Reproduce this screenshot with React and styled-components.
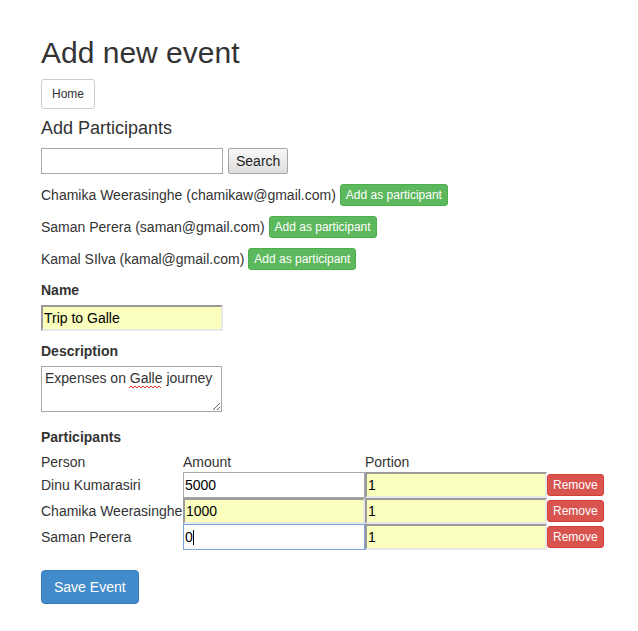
import React from "react"
import styled, { createGlobalStyle, css } from "styled-components"

const GlobalStyle = createGlobalStyle`
  body {
    margin: 0;
    background: #fff;
    font-family: "Liberation Sans", Arial, sans-serif;
    font-size: 14px;
    line-height: 20px;
    color: #333;
  }
`

const Page = styled.div`
  padding: 0 41px 30px;
`

const Title = styled.h2`
  margin: 36px 0 10px;
  font-size: 30px;
  font-weight: 400;
  line-height: 33px;
`

const Nav = styled.nav`
  display: flex;
  margin-bottom: 9px;
`

const SubTitle = styled.h4`
  margin: 0 0 10px;
  font-size: 18px;
  font-weight: 400;
  line-height: 20px;
`

const Row = styled.div`
  display: flex;
  align-items: center;
  gap: ${({ $gap }) => $gap || 4}px;
  margin-bottom: 10px;
  min-height: 22px;
`

const btnColors = {
  default: { bg: "#fff", border: "#ccc", color: "#333" },
  success: { bg: "#5cb85c", border: "#4cae4c", color: "#fff" },
  danger: { bg: "#d9534f", border: "#d43f3a", color: "#fff" },
  primary: { bg: "#428bca", border: "#357ebd", color: "#fff" },
}

const sizes = {
  xs: css`
    height: 22px;
    padding: 0 5px;
    font-size: 12px;
    border-radius: 3px;
  `,
  sm: css`
    height: 30px;
    padding: 0 10px;
    font-size: 12px;
    border-radius: 3px;
  `,
  md: css`
    height: 34px;
    padding: 0 12px;
    font-size: 14px;
    border-radius: 4px;
  `,
}

const Button = styled.button`
  display: inline-flex;
  align-items: center;
  justify-content: center;
  flex-shrink: 0;
  font-family: inherit;
  line-height: 1.5;
  cursor: pointer;
  border: 1px solid ${({ $variant }) => btnColors[$variant].border};
  background: ${({ $variant }) => btnColors[$variant].bg};
  color: ${({ $variant }) => btnColors[$variant].color};
  ${({ $size }) => sizes[$size]}
`

const PlainButton = styled.button`
  height: 26px;
  padding: 0 7px;
  font-family: inherit;
  font-size: 14px;
  color: #222;
  border: 1px solid #a6a6a6;
  border-radius: 2px;
  background: linear-gradient(#f8f8f8, #dddddd);
  cursor: pointer;
`

const Input = styled.input`
  box-sizing: border-box;
  width: ${({ $width }) => $width || 182}px;
  height: 26px;
  margin: 0;
  font-family: inherit;
  font-size: 14px;
  color: #000;
  outline: none;
  ${({ $filled, $focused }) =>
    $filled
      ? css`
          background: #faffbd;
          padding: 0 1px;
          border: 2px solid;
          border-color: #9a9a9a #e8e8e8 #e8e8e8 #9a9a9a;
        `
      : css`
          background: #fff;
          padding: 1px 1px;
          border: 1px solid ${$focused ? "#7ba4dc" : "#a9a9a9"};
        `}
`

const Label = styled.label`
  display: block;
  font-weight: 700;
  margin-bottom: 5px;
`

const Field = styled.div`
  margin-bottom: ${({ $gap }) => $gap || 10}px;
`

const TextWrap = styled.div`
  position: relative;
  width: 181px;
`

const TextArea = styled.textarea`
  display: block;
  box-sizing: border-box;
  width: 181px;
  height: 46px;
  margin: 0;
  padding: 1px 3px;
  font-family: inherit;
  font-size: 14px;
  line-height: 20px;
  color: #333;
  border: 1px solid #a9a9a9;
  outline: none;
  resize: both;
`

const Squiggle = styled.svg`
  position: absolute;
  left: 88px;
  top: 19px;
  pointer-events: none;
`

const Grid = styled.div`
  display: grid;
  grid-template-columns: 142px 182px 182px auto;
  grid-template-rows: 20px;
  grid-auto-rows: 26px;
  align-items: center;
  margin-bottom: 20px;
`

const Cell = styled.div`
  white-space: nowrap;
`

const FocusCell = styled.div`
  position: relative;
`

const Caret = styled.span`
  position: absolute;
  left: 10px;
  top: 6px;
  width: 1px;
  height: 15px;
  background: #000;
  pointer-events: none;
`

const people = [
  { name: "Chamika Weerasinghe", email: "chamikaw@gmail.com" },
  { name: "Saman Perera", email: "saman@gmail.com" },
  { name: "Kamal SIlva", email: "kamal@gmail.com" },
]

const participants = [
  { name: "Dinu Kumarasiri", amount: "5000", filled: false },
  { name: "Chamika Weerasinghe", amount: "1000", filled: true },
  { name: "Saman Perera", amount: "0", filled: false, focused: true },
]

export default function App() {
  return (
    <Page>
      <GlobalStyle />
      <Title>Add new event</Title>
      <Nav>
        <Button $variant="default" $size="sm">Home</Button>
      </Nav>
      <SubTitle>Add Participants</SubTitle>
      <Row $gap={5}>
        <Input />
        <PlainButton>Search</PlainButton>
      </Row>
      {people.map((p) => (
        <Row key={p.email}>
          <span>
            {p.name} ({p.email})
          </span>
          <Button $variant="success" $size="xs">Add as participant</Button>
        </Row>
      ))}
      <Field>
        <Label>Name</Label>
        <Input $filled defaultValue="Trip to Galle" />
      </Field>
      <Field $gap={15}>
        <Label>Description</Label>
        <TextWrap>
          <TextArea spellCheck={false} defaultValue="Expenses on Galle journey" />
          <Squiggle width="33" height="4" viewBox="0 0 33 4">
            <path d="M0 3 L2 1 L4 3 L6 1 L8 3 L10 1 L12 3 L14 1 L16 3 L18 1 L20 3 L22 1 L24 3 L26 1 L28 3 L30 1 L32 3" fill="none" stroke="#e33" strokeWidth="1" />
          </Squiggle>
        </TextWrap>
      </Field>
      <Label>Participants</Label>
      <Grid>
        <Cell>Person</Cell>
        <Cell>Amount</Cell>
        <Cell>Portion</Cell>
        <Cell />
        {participants.map((p) => (
          <React.Fragment key={p.name}>
            <Cell>{p.name}</Cell>
            {p.focused ? (
              <FocusCell>
                <Input $focused defaultValue={p.amount} />
                <Caret />
              </FocusCell>
            ) : (
              <Input $filled={p.filled} defaultValue={p.amount} />
            )}
            <Input $filled defaultValue="1" />
            <Cell>
              <Button $variant="danger" $size="xs">Remove</Button>
            </Cell>
          </React.Fragment>
        ))}
      </Grid>
      <Button $variant="primary" $size="md">Save Event</Button>
    </Page>
  )
}
